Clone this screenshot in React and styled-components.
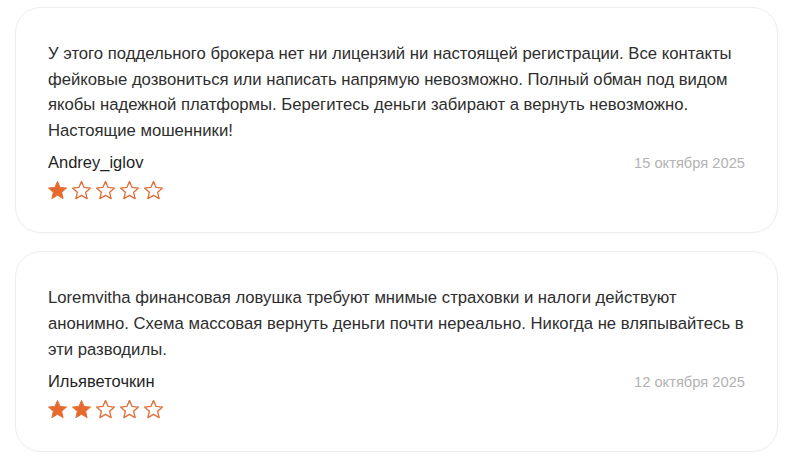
import React from "react";
import styled, { createGlobalStyle } from "styled-components";

const GlobalStyle = createGlobalStyle`
  html, body {
    margin: 0;
    padding: 0;
    background: #ffffff;
    font-family: "Liberation Sans", Arial, sans-serif;
  }
`;

const Page = styled.div`
  padding: 7px 22px 10px 15px;
  display: flex;
  flex-direction: column;
  gap: 18px;
`;

const Card = styled.div`
  background: #fff;
  border: 1px solid #eeeeee;
  border-radius: 26px;
  padding: 33px 32px 32px 32px;
  box-shadow: 0 1px 3px rgba(0, 0, 0, 0.02);
`;

const Text = styled.p`
  margin: 0 0 10px;
  font-size: 16.7px;
  line-height: 25.6px;
  color: #2e2e2e;
`;

const Meta = styled.div`
  display: flex;
  justify-content: space-between;
  align-items: baseline;
`;

const Author = styled.span`
  font-size: 16.5px;
  color: #1f1f1f;
`;

const Date = styled.span`
  font-size: 14.7px;
  color: #b3b3b3;
`;

const Stars = styled.div`
  display: flex;
  gap: 5px;
  margin-top: 9px;
`;

const StarIcon = ({ filled }) => (
  <svg width="19" height="19" viewBox="1.5 1.5 21 21">
    <polygon
      points="12,2 14.9,8.6 22,9.3 16.6,14 18.2,21 12,17.3 5.8,21 7.4,14 2,9.3 9.1,8.6"
      fill={filled ? "#e8692c" : "#fff"}
      stroke="#e0703a"
      strokeWidth={filled ? 1.1 : 1.5}
      strokeLinejoin="round"
    />
  </svg>
);

const reviews = [
  {
    text: "У этого поддельного брокера нет ни лицензий ни настоящей регистрации. Все контакты фейковые дозвониться или написать напрямую невозможно. Полный обман под видом якобы надежной платформы. Берегитесь деньги забирают а вернуть невозможно. Настоящие мошенники!",
    author: "Andrey_iglov",
    date: "15 октября 2025",
    rating: 1,
  },
  {
    text: "Loremvitha финансовая ловушка требуют мнимые страховки и налоги действуют анонимно. Схема массовая вернуть деньги почти нереально. Никогда не вляпывайтесь в эти разводилы.",
    author: "Ильяветочкин",
    date: "12 октября 2025",
    rating: 2,
  },
];

export default function App() {
  return (
    <>
      <GlobalStyle />
      <Page>
        {reviews.map((r) => (
          <Card key={r.author}>
            <Text>{r.text}</Text>
            <Meta>
              <Author>{r.author}</Author>
              <Date>{r.date}</Date>
            </Meta>
            <Stars>
              {[1, 2, 3, 4, 5].map((i) => (
                <StarIcon key={i} filled={i <= r.rating} />
              ))}
            </Stars>
          </Card>
        ))}
      </Page>
    </>
  );
}
